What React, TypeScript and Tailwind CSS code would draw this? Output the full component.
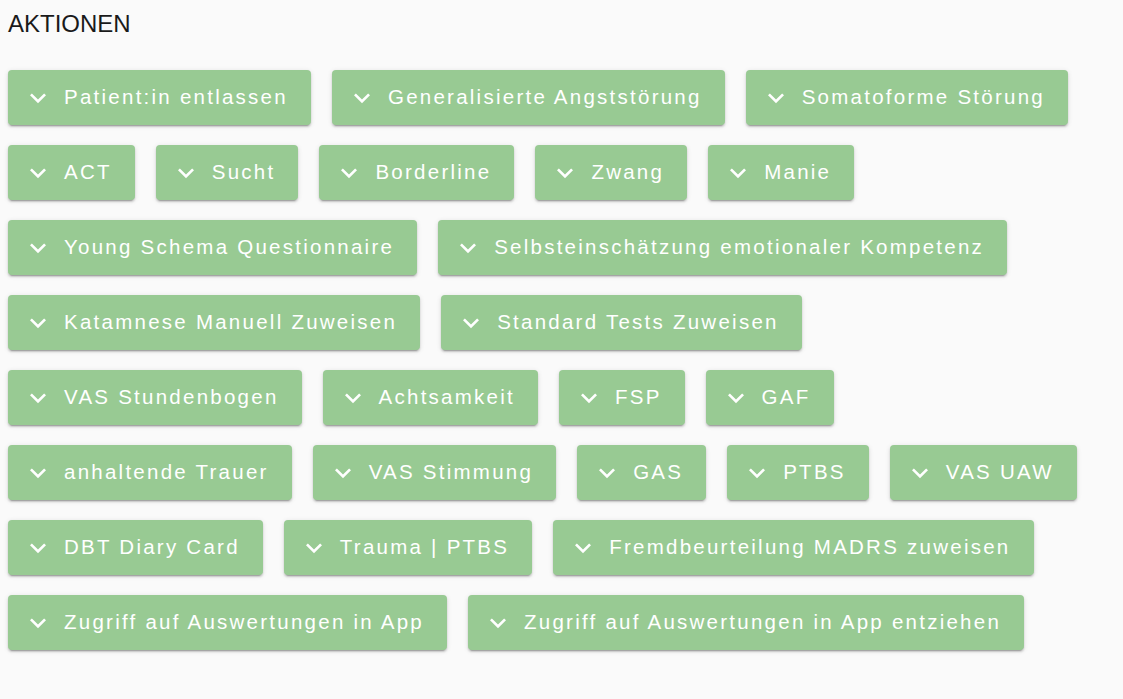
const actions = [
  'Patient:in entlassen',
  'Generalisierte Angststörung',
  'Somatoforme Störung',
  'ACT',
  'Sucht',
  'Borderline',
  'Zwang',
  'Manie',
  'Young Schema Questionnaire',
  'Selbsteinschätzung emotionaler Kompetenz',
  'Katamnese Manuell Zuweisen',
  'Standard Tests Zuweisen',
  'VAS Stundenbogen',
  'Achtsamkeit',
  'FSP',
  'GAF',
  'anhaltende Trauer',
  'VAS Stimmung',
  'GAS',
  'PTBS',
  'VAS UAW',
  'DBT Diary Card',
  'Trauma | PTBS',
  'Fremdbeurteilung MADRS zuweisen',
  'Zugriff auf Auswertungen in App',
  'Zugriff auf Auswertungen in App entziehen',
];

function ExpandMore() {
  return (
    <svg viewBox="0 0 24 24" className="w-8 h-8 shrink-0" fill="currentColor">
      <path d="M16.59 8.59 12 13.17 7.41 8.59 6 10l6 6 6-6z" />
    </svg>
  );
}

export default function App() {
  return (
    <div className="min-h-screen bg-[#fafafa] px-2 pt-[9px]">
      <h2 className="text-[24px] text-[#1a1a1a] font-['Liberation_Sans',Arial,sans-serif] leading-[30px] mb-[31px]">
        AKTIONEN
      </h2>
      <div className="flex flex-wrap gap-x-[21px] gap-y-5 pr-2">
        {actions.map((a) => (
          <button
            key={a}
            className="h-[55px] flex items-center gap-[10px] pl-[14px] pr-[23px] rounded bg-[#98ca93] text-white shadow-[0_3px_1px_-2px_rgba(0,0,0,0.2),0_2px_2px_0_rgba(0,0,0,0.14),0_1px_5px_0_rgba(0,0,0,0.12)] font-['Liberation_Sans',Arial,sans-serif] text-[20.5px] leading-6 tracking-[2.25px] whitespace-nowrap"
          >
            <ExpandMore />
            <span className="-mt-[2px]">{a}</span>
          </button>
        ))}
      </div>
    </div>
  );
}
